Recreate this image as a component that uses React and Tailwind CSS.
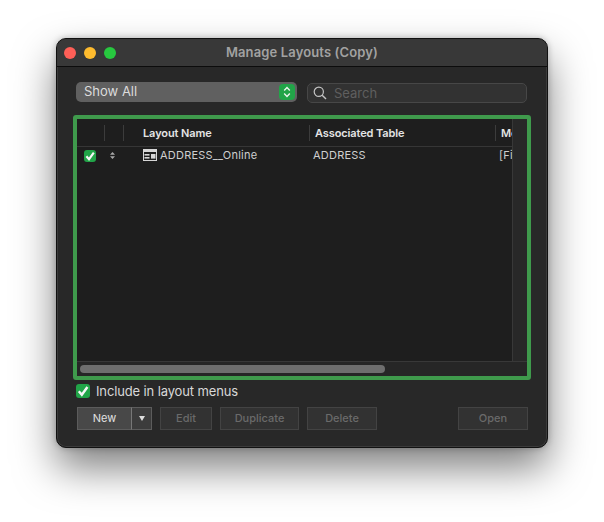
import React from "react";

const FONT = "font-['Inter','Liberation_Sans',sans-serif]";

function CheckBox({ size }) {
  return (
    <span className={`flex flex-shrink-0 items-center justify-center rounded-[3px] bg-[#21a448] ${size}`}>
      <svg viewBox="0 0 12 12" className="w-full h-full">
        <path d="M2.4 6.2 L5 9.2 L9.8 2.6" fill="none" stroke="#f6f6f6" strokeWidth="2.1" />
      </svg>
    </span>
  );
}

function FootButton({ label, width }) {
  return (
    <div className={`h-[23px] flex items-center justify-center bg-[#323232] border border-[#434343] text-[11px] font-medium text-[#6a6a6a] ${width}`}>
      {label}
    </div>
  );
}

export default function App() {
  return (
    <div className={`w-[604px] h-[522px] bg-white overflow-hidden pt-[38px] pl-[56px] ${FONT}`}>
      <div className="w-[492px] h-[410px] rounded-[10px] bg-[#282828] border border-[#111] shadow-[inset_0_0_0_1px_rgba(255,255,255,0.09),0_0_6px_rgba(0,0,0,0.25),0_20px_40px_rgba(0,0,0,0.5)] overflow-hidden flex flex-col">
        {/* Title bar */}
        <div className="relative h-[28px] flex-shrink-0 flex items-center bg-[#383838] border-b border-[#0c0c0c]">
          <div className="flex gap-2 pl-[7px]">
            <span className="w-3 h-3 rounded-full bg-[#fe5f57]" />
            <span className="w-3 h-3 rounded-full bg-[#febb2e]" />
            <span className="w-3 h-3 rounded-full bg-[#27c83f]" />
          </div>
          <div className="absolute inset-0 flex items-center justify-center text-[13px] font-semibold tracking-[0.01em] text-[#a2a2a2]">
            Manage Layouts (Copy)
          </div>
        </div>

        {/* Filter row */}
        <div className="flex pt-[15px] pl-[19px] gap-[10px]">
          <div className="w-[221px] h-[20px] rounded-[5px] bg-[#606060] flex items-center justify-between pl-2 pr-[2px] text-[13px] text-[#dcdcdc]">
            <span>Show All</span>
            <span className="w-4 h-4 rounded-[4px] bg-[#21a448] flex items-center justify-center">
              <svg viewBox="0 0 16 16" className="w-4 h-4">
                <path d="M5.2 6.4 L8 3.6 L10.8 6.4 M5.2 9.6 L8 12.4 L10.8 9.6" fill="none" stroke="#eef6ef" strokeWidth="1.4" />
              </svg>
            </span>
          </div>
          <div className="w-[220px] h-[20px] mt-px rounded-[5px] bg-[#323232] border border-[#474747] flex items-center pl-[5px] gap-[7px] text-[13px] text-[#5f5f5f]">
            <svg viewBox="0 0 14 14" className="w-[14px] h-[14px]">
              <circle cx="5.8" cy="5.8" r="4.6" fill="none" stroke="#c4c4c4" strokeWidth="1.2" />
              <path d="M9.2 9.2 L13 13" stroke="#c4c4c4" strokeWidth="1.4" />
            </svg>
            <span className="relative top-px">Search</span>
          </div>
        </div>

        {/* Table with green focus frame */}
        <div className="ml-[16px] mt-[12px] w-[458px] h-[265px] flex-shrink-0 border-4 border-[#3f9a4c] rounded-[3px] bg-[#282828] flex flex-col">
          <div className="flex flex-1 min-h-0">
            <div className="w-[436px] flex-shrink-0 bg-[#1e1e1e] border-r border-[#383838] overflow-hidden flex flex-col">
              <div className="h-[28px] flex-shrink-0 flex items-center border-b border-[#363636] text-[11px] font-semibold tracking-[-0.01em] text-[#e4e4e4]">
                <div className="w-[28px] flex-shrink-0 h-[16px] border-r border-[#3c3c3c]" />
                <div className="w-[19px] flex-shrink-0 h-[16px] border-r border-[#3c3c3c]" />
                <div className="w-[186px] flex-shrink-0 h-[16px] border-r border-[#3c3c3c] pl-[19px] leading-[16px]">Layout Name</div>
                <div className="w-[186px] flex-shrink-0 h-[16px] border-r border-[#3c3c3c] pl-[5px] leading-[16px]">Associated Table</div>
                <div className="flex-shrink-0 pl-[5px] leading-[16px]">Mod</div>
              </div>
              <div className="h-[16px] flex items-center text-[11px] tracking-[0.02em] text-[#cfcfcf]">
                <div className="w-[28px] flex-shrink-0 pl-[7px] pt-[2px]">
                  <CheckBox size="w-3 h-3" />
                </div>
                <div className="w-[19px] flex-shrink-0 pl-[5px]">
                  <svg viewBox="0 0 5 7" className="w-[5px] h-[7px]">
                    <path d="M2.5 0 L5 2.8 L0 2.8 Z M2.5 7 L5 4.2 L0 4.2 Z" fill="#a8a8a8" />
                  </svg>
                </div>
                <div className="w-[186px] flex-shrink-0 pl-[19px] flex items-center gap-[3px]">
                  <svg viewBox="0 0 14 12" className="w-[14px] h-[12px]">
                    <rect width="14" height="12" fill="#d6d6d6" />
                    <rect x="1" y="3" width="12" height="8" fill="#1e1e1e" />
                    <rect x="1.5" y="5" width="5" height="1.6" fill="#d6d6d6" />
                    <rect x="1.5" y="8" width="5" height="1.6" fill="#d6d6d6" />
                    <rect x="8" y="5" width="4.5" height="4.6" fill="#d6d6d6" />
                  </svg>
                  <span>ADDRESS__Online</span>
                </div>
                <div className="w-[186px] flex-shrink-0 pl-[3px]">ADDRESS</div>
                <div className="flex-shrink-0 pl-[3px] whitespace-nowrap">[File]</div>
              </div>
            </div>
            <div className="flex-1 bg-[#282828]" />
          </div>
          <div className="h-[15px] flex-shrink-0 border-t border-[#383838] bg-[#262626] pl-[3px] pt-[3px]">
            <div className="w-[305px] h-[8px] rounded-full bg-[#6e6e6e]" />
          </div>
        </div>

        {/* Include checkbox */}
        <div className="flex items-center gap-[6px] ml-[19px] mt-[4px] h-[14px] text-[13px] tracking-[-0.01em] text-[#d8d8d8]">
          <CheckBox size="w-[14px] h-[14px]" />
          <span className="relative top-px">Include in layout menus</span>
        </div>

        {/* Buttons */}
        <div className="flex items-center ml-[20px] mt-[9px] w-[451px]">
          <div className="w-[55px] h-[23px] flex items-center justify-center bg-[#484848] border border-[#5c5c5c] border-r-[#777] text-[11px] text-[#e0e0e0]">
            New
          </div>
          <div className="w-[20px] h-[23px] flex items-center justify-center bg-[#3c3c3c] border border-l-0 border-[#5c5c5c]">
            <svg viewBox="0 0 6 5" className="w-[6px] h-[5px]">
              <path d="M0 0 H6 L3 5 Z" fill="#dcdcdc" />
            </svg>
          </div>
          <div className="flex gap-2 ml-2">
            <FootButton label="Edit" width="w-[52px]" />
            <FootButton label="Duplicate" width="w-[79px]" />
            <FootButton label="Delete" width="w-[70px]" />
          </div>
          <div className="ml-auto">
            <FootButton label="Open" width="w-[70px]" />
          </div>
        </div>
      </div>
    </div>
  );
}
